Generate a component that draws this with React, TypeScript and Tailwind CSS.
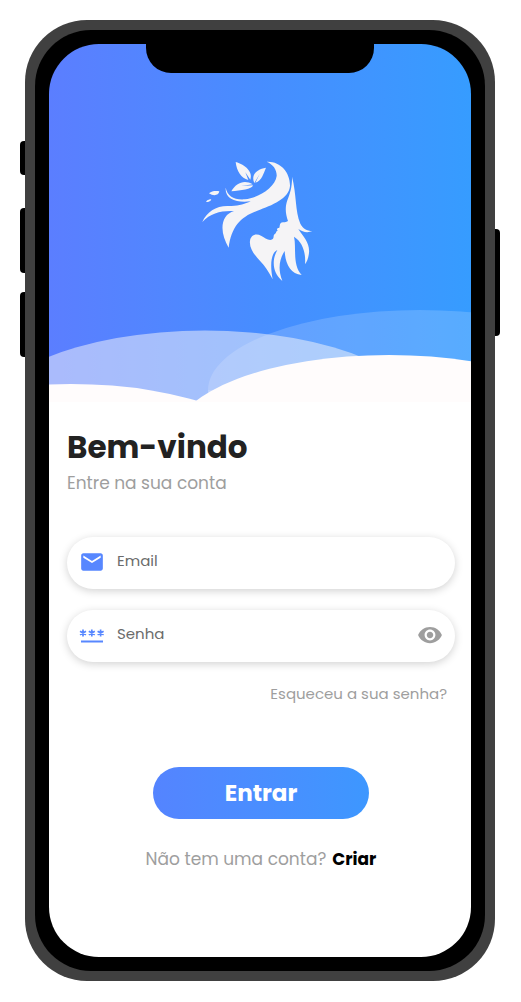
import type { ReactNode } from "react";
import { MdEmail, MdRemoveRedEye } from "react-icons/md";

function Logo() {
  return (
    <svg viewBox="0 0 405 420" className="mr-[6px] h-[140px] w-[135px]" fill="#f5f4f6" role="img" aria-label="Logo">
      <path d="M230 35C272 33 301 68 300 108C297 146 246 166 202 182C152 200 124 230 116 293C98 264 90 226 106 202C112 192 121 187 132 183C96 181 62 188 37 216C50 184 82 165 120 168C146 169 164 162 182 154C140 159 104 148 107 113C112 137 132 151 165 148C205 144 256 112 260 78C261 60 250 43 230 35Z" />
      <path d="M137 36C166 44 190 66 181 89L166 67L175 90C154 84 140 64 137 36Z" />
      <path d="M228 53C196 58 183 78 193 99L209 72L196 98C217 91 220 70 228 53Z" />
      <path d="M124 124C138 98 164 88 188 103L154 108L189 106C186 119 152 121 124 124Z" />
      <path d="M57 130C66 122 78 122 88 124C86 137 70 139 57 130Z" />
      <path d="M48 155C53 149 59 148 64 148C61 155 54 157 48 155Z" />
      <path d="M306 80C320 132 315 183 331 221C339 236 350 242 367 243C354 249 338 247 325 237C340 261 360 278 357 309C355 325 351 335 345 343C348 308 338 276 312 260C320 290 306 345 335 375C302 372 286 343 284 303C273 320 260 350 277 393C248 370 244 331 262 300C242 308 240 348 248 388C236 365 225 349 211 334C195 316 177 296 180 272C184 252 201 251 213 257C224 263 237 274 247 268C254 262 248 256 255 251C260 249 256 244 263 242C258 237 263 234 268 233C270 228 268 223 273 218C280 216 289 218 294 213C286 190 285 172 292 151C300 131 307 110 306 80Z" />
    </svg>
  );
}

function Waves() {
  return (
    <svg
      viewBox="0 0 422 102"
      preserveAspectRatio="none"
      className="block h-[102px] w-full"
      aria-hidden="true"
    >
      <ellipse cx="371" cy="90" rx="212" ry="80" fill="#fff" opacity="0.17" />
      <path d="M159 90V102H422V90Z" fill="#fff" opacity="0.17" />
      <ellipse cx="156" cy="130.5" rx="231" ry="100" fill="#f9f7fa" opacity="0.5" />
      <ellipse cx="22" cy="168" rx="210" ry="84" fill="#fffcfc" />
      <ellipse cx="340" cy="137" rx="215" ry="82" fill="#fffcfc" />
    </svg>
  );
}

function PasswordIcon() {
  return (
    <svg viewBox="0 0 26 26" className="size-[26px]" fill="none" stroke="currentColor" aria-hidden="true">
      <path d="M2 19.5H24" strokeWidth="2" />
      <path
        d="M4 7.6V14.4M1 9.3L7 12.7M1 12.7L7 9.3M12.8 7.6V14.4M9.8 9.3L15.8 12.7M9.8 12.7L15.8 9.3M21.6 7.6V14.4M18.6 9.3L24.6 12.7M18.6 12.7L24.6 9.3"
        strokeWidth="1.7"
      />
    </svg>
  );
}

type FieldProps = {
  id: string;
  type: string;
  label: string;
  icon: ReactNode;
  action?: ReactNode;
};

function Field({ id, type, label, icon, action }: FieldProps) {
  return (
    <div className="flex h-[52px] items-center rounded-full bg-white px-3 pb-0.5 shadow-[0_2px_8px_rgba(0,0,0,0.18)]">
      <label htmlFor={id} aria-label={label} className="shrink-0 text-[26px] text-[#5787ff]">
        {icon}
      </label>
      <input
        id={id}
        type={type}
        aria-label={label}
        placeholder={label}
        className="h-full min-w-0 flex-1 bg-transparent pb-1 pl-3 text-[15px] text-[#333] outline-none placeholder:text-[#6b6b6b]"
      />
      {action}
    </div>
  );
}

export default function App() {
  return (
    <div className="min-h-screen bg-white py-5 pr-[26px] pl-[25px] font-['Poppins','Inter',sans-serif]">
      <div className="relative mx-auto max-w-[470px] rounded-[62px] bg-[#404040] p-[10px]">
        <span className="absolute top-[121px] -left-[5px] h-[34px] w-[5px] rounded-l bg-black" />
        <span className="absolute top-[188px] -left-[5px] h-[65px] w-[5px] rounded-l bg-black" />
        <span className="absolute top-[272px] -left-[5px] h-[65px] w-[5px] rounded-l bg-black" />
        <span className="absolute top-[209px] -right-[5px] h-[107px] w-[5px] rounded-r bg-black" />

        <div className="relative rounded-[56px] bg-black p-[14px]">
          <div className="absolute top-[14px] left-1/2 z-10 h-[29px] w-[228px] -translate-x-1/2 rounded-b-[25px] bg-black" />

          <main>
            <header className="flex flex-col items-center rounded-t-[50px] bg-linear-to-r from-[#5b7eff] via-[#478dff] to-[#369cff] pt-[106px]">
              <Logo />
              <div className="mt-[10px] w-full">
                <Waves />
              </div>
            </header>

            <form
              className="rounded-b-[50px] bg-white pt-[25px] pr-4 pb-[86px] pl-[18px]"
              onSubmit={(e) => e.preventDefault()}
            >
              <h1 className="text-[31px] leading-10 font-bold text-[#222]">Bem-vindo</h1>
              <p className="mt-1 text-[17px] leading-6 text-[#9e9e9e]">Entre na sua conta</p>

              <div className="mt-[42px] flex flex-col gap-[21px]">
                <Field id="email" type="email" label="Email" icon={<MdEmail />} />
                <Field
                  id="senha"
                  type="password"
                  label="Senha"
                  icon={<PasswordIcon />}
                  action={
                    <button type="button" aria-label="Mostrar senha" className="text-[26px] text-[#9e9e9e]">
                      <MdRemoveRedEye />
                    </button>
                  }
                />
              </div>

              <div className="mt-5 flex justify-end pr-2">
                <a href="#recuperar" className="text-[15px] leading-6 text-[#9e9e9e]">
                  Esqueceu a sua senha?
                </a>
              </div>

              <button
                type="submit"
                className="mx-auto mt-[61px] block h-[52px] w-[216px] rounded-full bg-linear-to-r from-[#5484ff] to-[#3d97ff] text-[23px] font-bold text-white"
              >
                Entrar
              </button>

              <p className="mt-7 flex justify-center gap-1.5 text-[17px] leading-6 text-[#9e9e9e]">
                Não tem uma conta?
                <a href="#criar" className="font-bold text-black">
                  Criar
                </a>
              </p>
            </form>
          </main>
        </div>
      </div>
    </div>
  );
}
